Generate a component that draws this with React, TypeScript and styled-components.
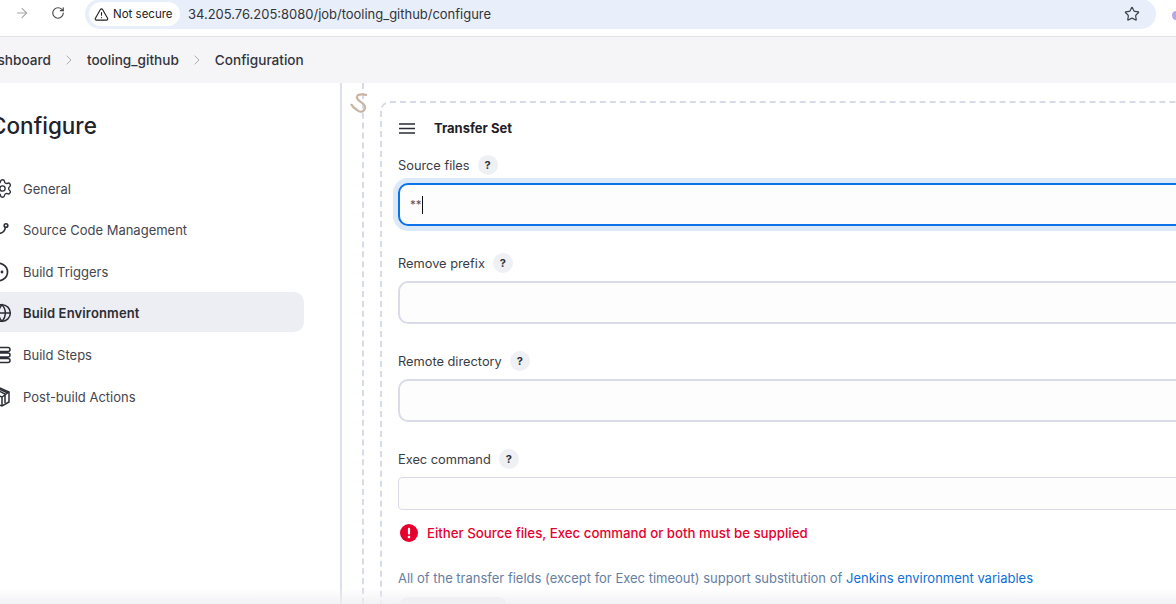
import { createGlobalStyle, styled } from "styled-components";
import { ArrowRight, ChevronRight, RotateCw, Star, TriangleAlert, Settings, Globe } from "lucide-react";

const GlobalStyle = createGlobalStyle`
    html, body {
        margin: 0;
        padding: 0;
        background: #fff;
    }
    * {
        box-sizing: border-box;
    }
    body {
        font-family: Inter, "Noto Sans", "Liberation Sans", sans-serif;
        color: #20222c;
    }
`;

const Page = styled.div`
    position: relative;
    width: 1176px;
    height: 604px;
    overflow: hidden;
    display: flex;
    flex-direction: column;
`;

const BrowserBar = styled.div`
    height: 37px;
    flex: none;
    display: flex;
    align-items: flex-start;
    border-bottom: 1px solid #e2e2e2;
    background: #fff;
    padding: 0 0 0 14px;
    color: #474747;
`;

const NavButton = styled.span<{ $muted?: boolean }>`
    width: 16px;
    height: 26px;
    margin-right: 20px;
    display: flex;
    align-items: center;
    justify-content: center;
    color: ${({ $muted }) => ($muted ? "#a8a8a8" : "#474747")};
`;

const Omnibox = styled.div`
    margin-left: -1px;
    width: 1071px;
    height: 30px;
    margin-top: -1px;
    background: #e9effa;
    border-radius: 15px;
    display: flex;
    align-items: center;
    padding: 0 16px 0 4px;
`;

const SecurityChip = styled.span`
    height: 24px;
    width: 91px;
    background: #fff;
    border-radius: 12px;
    display: flex;
    align-items: center;
    padding-left: 5px;
    gap: 4px;
    font-size: 11.5px;
    color: #202124;
    flex: none;
`;

const Url = styled.span`
    flex: 1;
    margin-left: 8px;
    font-size: 12.97px;
    color: #303338;
    white-space: nowrap;
`;

const ProfileDot = styled.span`
    position: absolute;
    top: 11px;
    left: 1172px;
    width: 8px;
    height: 9px;
    border-radius: 50%;
    background: #b9a4ee;
`;

const Breadcrumbs = styled.nav`
    height: 46px;
    flex: none;
    display: flex;
    align-items: center;
    background: #f5f5f7;
    margin-left: -20px;
    font-size: 13.6px;
    font-weight: 500;
    color: #32343d;
    white-space: nowrap;
`;

const Crumb = styled.span``;

const CrumbSeparator = styled.span`
    width: 36px;
    display: flex;
    justify-content: center;
    color: #a9adb6;
`;

const Body = styled.div`
    flex: 1;
    min-height: 0;
    display: flex;
`;

const Sidebar = styled.aside`
    width: 342px;
    flex: none;
    border-right: 2px solid #dce0ea;
    padding-top: 27px;
`;

const SidebarTitle = styled.h1`
    margin: 0 0 0 -10px;
    font-size: 22.5px;
    line-height: 32px;
    font-weight: 500;
    color: #20222c;
`;

const SideTasks = styled.div`
    margin-top: 25.6px;
    margin-left: -17px;
    width: 321px;
    display: flex;
    flex-direction: column;
    gap: 1.6px;
`;

const SideItem = styled.div<{ $active?: boolean }>`
    height: 40px;
    display: flex;
    align-items: center;
    gap: 13px;
    padding: 2px 0 0 11px;
    border-radius: 10px;
    font-size: 13px;
    font-weight: ${({ $active }) => ($active ? 600 : 400)};
    letter-spacing: ${({ $active }) => ($active ? "0.15px" : "0")};
    color: ${({ $active }) => ($active ? "#2b2d36" : "#44464f")};
    background: ${({ $active }) => ($active ? "#edeef3" : "transparent")};
`;

const SideIcon = styled.span`
    width: 16px;
    height: 18px;
    flex: none;
    display: flex;
    align-items: center;
    justify-content: center;
    color: #2c2e37;

    svg {
        flex: none;
    }
`;

const Main = styled.main`
    position: relative;
    flex: 1;
    min-width: 0;
    padding-left: 20px;
`;

const HookMark = styled.svg`
    position: absolute;
    left: 8px;
    top: 8px;
`;

const Rail = styled.div`
    height: 100%;
    border-left: 2px dashed #d6dbe7;
    padding: 18px 0 0 16px;
`;

const TransferSet = styled.section`
    margin-right: -20px;
    height: 600px;
    border: 2px dashed #d6dbe7;
    border-radius: 10px;
    padding: 15px 0 0 16px;
`;

const SetHeader = styled.div`
    height: 20px;
    margin-bottom: 16px;
    display: flex;
    align-items: center;
    gap: 19px;
    font-size: 13px;
    font-weight: 700;
    color: #1f2129;
`;

const HandleIcon = styled.svg`
    flex: none;
`;

const Field = styled.div`
    margin-bottom: 26px;
`;

const LabelRow = styled.div`
    height: 22px;
    display: flex;
    align-items: center;
    gap: 8px;
    font-size: 12.8px;
    color: #3a3c45;
    margin-bottom: 7px;
`;

const HelpBadge = styled.span`
    width: 20px;
    height: 20px;
    border-radius: 50%;
    background: #eef0f4;
    display: flex;
    align-items: center;
    justify-content: center;
    font-size: 11px;
    font-weight: 700;
    color: #2f3139;
`;

const TextBox = styled.div<{ $focused?: boolean }>`
    position: relative;
    height: 43px;
    margin-right: -20px;
    background: #fdfdfe;
    border-radius: 10px;
    border: 2px solid ${({ $focused }) => ($focused ? "#0b72e7" : "#d9dce8")};
    box-shadow: ${({ $focused }) => ($focused ? "0 0 0 5px #dce9f9" : "none")};
    display: flex;
    align-items: center;
    padding-left: 10px;
    font-size: 11.5px;
    color: #55575f;
`;

const Caret = styled.span`
    display: inline-block;
    width: 1px;
    height: 18px;
    background: #111;
`;

const CommandArea = styled.div`
    position: relative;
    height: 33px;
    margin-right: -1px;
    background: #fdfdfe;
    border: 1px solid #d9dce8;
    border-radius: 4px;
`;

const ResizeGrip = styled.svg`
    position: absolute;
    right: 0;
    bottom: 1px;
`;

const ErrorRow = styled.div`
    margin-top: 13px;
    height: 20px;
    display: flex;
    align-items: center;
    gap: 9px;
    padding-left: 2px;
    font-size: 13.25px;
    font-weight: 500;
    color: #e6002e;
`;

const Hint = styled.p`
    margin: 25px 0 0;
    font-size: 13px;
    line-height: 20px;
    color: #657ea3;
    white-space: nowrap;
`;

const HintLink = styled.span`
    color: #0f6fd6;
`;

const GhostButton = styled.div`
    margin-top: 9px;
    width: 110px;
    height: 30px;
    border-radius: 10px;
    background: #f0f1f4;
`;

const BottomFade = styled.div`
    position: absolute;
    left: 0;
    right: 0;
    bottom: 0;
    height: 16px;
    background: linear-gradient(to bottom, rgba(240, 240, 243, 0), rgba(240, 240, 243, 0.85));
    pointer-events: none;
`;

const CodeIcon = () => (
    <svg width="16" height="16" viewBox="0 0 16 16" fill="none" stroke="currentColor" strokeWidth="1.6">
        <path d="M4 11.5 C8 11.5 11 9 11.5 5" />
        <circle cx="12" cy="3.5" r="1.8" />
    </svg>
);

const TriggerIcon = () => (
    <svg width="20" height="20" viewBox="0 0 20 20" fill="none" stroke="currentColor" strokeWidth="1.7">
        <path d="M3 2.5 A8.5 8.5 0 1 1 3 17.5" />
        <circle cx="10" cy="10" r="1.4" fill="currentColor" stroke="none" />
    </svg>
);

const StepsIcon = () => (
    <svg width="20" height="18" viewBox="0 0 20 18" fill="none" stroke="currentColor" strokeWidth="1.5">
        <path d="M0 1.5h16a1.7 1.7 0 0 1 0 4H0M0 7h16a1.7 1.7 0 0 1 0 4H0M0 12.5h16a1.7 1.7 0 0 1 0 4H0" />
    </svg>
);

const PackageIcon = () => (
    <svg width="20" height="20" viewBox="0 0 20 20" fill="none" stroke="currentColor" strokeWidth="1.5">
        <path d="M0 3.5 8 1l9 4v10l-7 4-10-4" />
        <path d="M0 6l10 4 7-5M10 10v9M4 2.5l9 4.5v9M7 2l9 4" />
    </svg>
);

const ErrorIcon = () => (
    <svg width="18" height="18" viewBox="0 0 18 18">
        <circle cx="9" cy="9" r="9" fill="#e6002e" />
        <rect x="7.9" y="3.8" width="2.2" height="6.8" rx="1" fill="#fff" />
        <circle cx="9" cy="13" r="1.3" fill="#fff" />
    </svg>
);

const sideItems = [
    { label: "General", icon: <Settings size={21} strokeWidth={1.5} /> },
    { label: "Source Code Management", icon: <CodeIcon /> },
    { label: "Build Triggers", icon: <TriggerIcon /> },
    { label: "Build Environment", icon: <Globe size={20} strokeWidth={1.8} />, active: true },
    { label: "Build Steps", icon: <StepsIcon /> },
    { label: "Post-build Actions", icon: <PackageIcon /> },
];

const fields = [
    { label: "Source files", value: "**", focused: true },
    { label: "Remove prefix" },
    { label: "Remote directory" },
];

export default function App() {
    return (
        <Page>
            <GlobalStyle />
            <BrowserBar>
                <NavButton $muted>
                    <ArrowRight size={16} strokeWidth={1.6} />
                </NavButton>
                <NavButton>
                    <RotateCw size={14} strokeWidth={2} />
                </NavButton>
                <Omnibox>
                    <SecurityChip>
                        <TriangleAlert size={15} strokeWidth={1.8} />
                        Not secure
                    </SecurityChip>
                    <Url>34.205.76.205:8080/job/tooling_github/configure</Url>
                    <Star size={16} strokeWidth={1.8} color="#3f4246" />
                </Omnibox>
                <ProfileDot />
            </BrowserBar>
            <Breadcrumbs>
                <Crumb>Dashboard</Crumb>
                <CrumbSeparator>
                    <ChevronRight size={16} strokeWidth={1.5} />
                </CrumbSeparator>
                <Crumb>tooling_github</Crumb>
                <CrumbSeparator>
                    <ChevronRight size={16} strokeWidth={1.5} />
                </CrumbSeparator>
                <Crumb>Configuration</Crumb>
            </Breadcrumbs>
            <Body>
                <Sidebar>
                    <SidebarTitle>Configure</SidebarTitle>
                    <SideTasks>
                        {sideItems.map((item) => (
                            <SideItem key={item.label} $active={item.active}>
                                <SideIcon>{item.icon}</SideIcon>
                                {item.label}
                            </SideItem>
                        ))}
                    </SideTasks>
                </Sidebar>
                <Main>
                    <Rail>
                        <TransferSet>
                            <SetHeader>
                                <HandleIcon width="17" height="11" viewBox="0 0 17 11" stroke="#2a2c34" strokeWidth="1.5">
                                    <path d="M1 1h16M1 5.5h16M1 10h16" />
                                </HandleIcon>
                                Transfer Set
                            </SetHeader>
                            {fields.map((field) => (
                                <Field key={field.label}>
                                    <LabelRow>
                                        {field.label}
                                        <HelpBadge>?</HelpBadge>
                                    </LabelRow>
                                    <TextBox $focused={field.focused}>
                                        {field.value}
                                        {field.focused && <Caret />}
                                    </TextBox>
                                </Field>
                            ))}
                            <LabelRow>
                                Exec command
                                <HelpBadge>?</HelpBadge>
                            </LabelRow>
                            <CommandArea>
                                <ResizeGrip width="7" height="7" viewBox="0 0 7 7" stroke="#555" strokeWidth="1">
                                    <path d="M0 7 7 0M4 7l3-3" />
                                </ResizeGrip>
                            </CommandArea>
                            <ErrorRow>
                                <ErrorIcon />
                                Either Source files, Exec command or both must be supplied
                            </ErrorRow>
                            <Hint>
                                All of the transfer fields (except for Exec timeout) support substitution of{" "}
                                <HintLink>Jenkins environment variables</HintLink>
                            </Hint>
                            <GhostButton />
                        </TransferSet>
                    </Rail>
                    <HookMark width="19" height="24" viewBox="0 0 19 24" fill="none" stroke="#c9b3a3" strokeWidth="2.2">
                        <path d="M17 4 C12 3 6 3 7 7 C8 11 16 12 15 17 C14 21 10 22 7 19 C4 17 2 15 1 13" />
                    </HookMark>
                </Main>
            </Body>
            <BottomFade />
        </Page>
    );
}
